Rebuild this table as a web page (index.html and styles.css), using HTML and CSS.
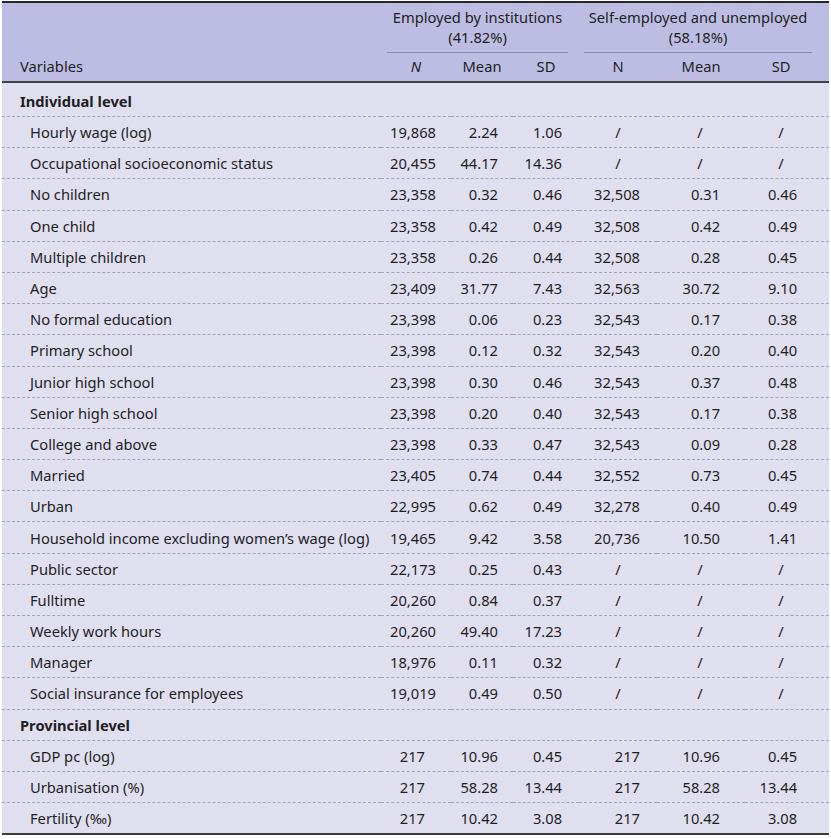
FILE: index.html
```html
<!DOCTYPE html>
<html>
<head>
<meta charset="utf-8">
<link rel="stylesheet" href="styles.css">
</head>
<body>
<table class="stats">
  <colgroup>
    <col class="c-var"><col class="c-n1"><col class="c-m1"><col class="c-s1"><col class="c-n2"><col class="c-m2"><col class="c-s2">
  </colgroup>
  <thead>
    <tr class="h1">
      <th class="var-h" rowspan="2">Variables</th>
      <th class="grp g1" colspan="3"><div class="grp-in">Employed by institutions<br>(41.82%)</div></th>
      <th class="grp g2" colspan="3"><div class="grp-in">Self-employed and unemployed<br>(58.18%)</div></th>
    </tr>
    <tr class="h2">
      <th><i>N</i></th><th>Mean</th><th>SD</th><th>N</th><th>Mean</th><th class="last">SD</th>
    </tr>
  </thead>
  <tbody>
    <tr class="sec first"><td colspan="7">Individual level</td></tr>
    <tr><td>Hourly wage (log)</td><td>19,868</td><td>2.24</td><td>1.06</td><td class="na">/</td><td class="na">/</td><td class="na">/</td></tr>
    <tr><td>Occupational socioeconomic status</td><td>20,455</td><td>44.17</td><td>14.36</td><td class="na">/</td><td class="na">/</td><td class="na">/</td></tr>
    <tr><td>No children</td><td>23,358</td><td>0.32</td><td>0.46</td><td>32,508</td><td>0.31</td><td>0.46</td></tr>
    <tr><td>One child</td><td>23,358</td><td>0.42</td><td>0.49</td><td>32,508</td><td>0.42</td><td>0.49</td></tr>
    <tr><td>Multiple children</td><td>23,358</td><td>0.26</td><td>0.44</td><td>32,508</td><td>0.28</td><td>0.45</td></tr>
    <tr><td>Age</td><td>23,409</td><td>31.77</td><td>7.43</td><td>32,563</td><td>30.72</td><td>9.10</td></tr>
    <tr><td>No formal education</td><td>23,398</td><td>0.06</td><td>0.23</td><td>32,543</td><td>0.17</td><td>0.38</td></tr>
    <tr><td>Primary school</td><td>23,398</td><td>0.12</td><td>0.32</td><td>32,543</td><td>0.20</td><td>0.40</td></tr>
    <tr><td>Junior high school</td><td>23,398</td><td>0.30</td><td>0.46</td><td>32,543</td><td>0.37</td><td>0.48</td></tr>
    <tr><td>Senior high school</td><td>23,398</td><td>0.20</td><td>0.40</td><td>32,543</td><td>0.17</td><td>0.38</td></tr>
    <tr><td>College and above</td><td>23,398</td><td>0.33</td><td>0.47</td><td>32,543</td><td>0.09</td><td>0.28</td></tr>
    <tr><td>Married</td><td>23,405</td><td>0.74</td><td>0.44</td><td>32,552</td><td>0.73</td><td>0.45</td></tr>
    <tr><td>Urban</td><td>22,995</td><td>0.62</td><td>0.49</td><td>32,278</td><td>0.40</td><td>0.49</td></tr>
    <tr><td>Household income excluding women’s wage (log)</td><td>19,465</td><td>9.42</td><td>3.58</td><td>20,736</td><td>10.50</td><td>1.41</td></tr>
    <tr><td>Public sector</td><td>22,173</td><td>0.25</td><td>0.43</td><td class="na">/</td><td class="na">/</td><td class="na">/</td></tr>
    <tr><td>Fulltime</td><td>20,260</td><td>0.84</td><td>0.37</td><td class="na">/</td><td class="na">/</td><td class="na">/</td></tr>
    <tr><td>Weekly work hours</td><td>20,260</td><td>49.40</td><td>17.23</td><td class="na">/</td><td class="na">/</td><td class="na">/</td></tr>
    <tr><td>Manager</td><td>18,976</td><td>0.11</td><td>0.32</td><td class="na">/</td><td class="na">/</td><td class="na">/</td></tr>
    <tr><td>Social insurance for employees</td><td>19,019</td><td>0.49</td><td>0.50</td><td class="na">/</td><td class="na">/</td><td class="na">/</td></tr>
    <tr class="sec"><td colspan="7">Provincial level</td></tr>
    <tr><td>GDP pc (log)</td><td class="short">217</td><td>10.96</td><td>0.45</td><td>217</td><td>10.96</td><td>0.45</td></tr>
    <tr><td>Urbanisation (%)</td><td class="short">217</td><td>58.28</td><td>13.44</td><td>217</td><td>58.28</td><td>13.44</td></tr>
    <tr class="lastrow"><td>Fertility (‰)</td><td class="short">217</td><td>10.42</td><td>3.08</td><td>217</td><td>10.42</td><td>3.08</td></tr>
  </tbody>
</table>
</body>
</html>
```

FILE: styles.css
```css
html, body {
  margin: 0;
  padding: 0;
  background: #ffffff;
}
body {
  padding: 1px 2px 0 2px;
  font-family: "Noto Sans", "Open Sans", "DejaVu Sans", sans-serif;
  font-size: 14.7px;
  color: #1e1e1e;
}
.stats {
  width: 827px;
  table-layout: fixed;
  border-collapse: collapse;
  border-top: 2px solid #262626;
  border-bottom: 2px solid #3c3c3c;
}
.c-var { width: 379px; }
.c-n1 { width: 70px; }
.c-m1 { width: 62px; }
.c-s1 { width: 66px; }
.c-n2 { width: 78px; }
.c-m2 { width: 88px; }
.c-s2 { width: 84px; }

thead th {
  background: #bdbde3;
  font-weight: normal;
  line-height: 20px;
  padding: 0;
}
thead tr.h2 th {
  border-bottom: 2px solid #404048;
  height: 26px;
  text-align: center;
  vertical-align: middle;
  padding-bottom: 2px;
}
thead tr.h2 th.last { padding-right: 12px; }
.var-h {
  text-align: left;
  vertical-align: bottom;
  padding: 0 0 5px 18px !important;
  border-bottom: 2px solid #404048;
}
.grp {
  text-align: center;
  vertical-align: top;
}
.grp-in {
  padding: 4px 0 5px 0;
  border-bottom: 1px solid #8a8aa6;
}
.g1 .grp-in { margin: 0 11px 0 6px; }
.g2 .grp-in { margin: 0 17px 0 5px; }

tbody td {
  background: #dfdff0;
  height: 30.2px;
  padding: 0;
  line-height: 20px;
  border-bottom: 1px dashed #a4a4b4;
  text-align: right;
  vertical-align: middle;
}
tbody tr.first td {
  height: 31px;
  padding-top: 2px;
}
tbody tr.lastrow td { border-bottom: none; }
tbody td:first-child {
  text-align: left;
  padding-left: 28px;
}
tbody tr.sec td {
  font-weight: bold;
  padding-left: 18px;
}
tbody td:nth-child(2) { padding-right: 15px; }
tbody td:nth-child(3) { padding-right: 15px; }
tbody td:nth-child(4) { padding-right: 17px; }
tbody td:nth-child(5) { padding-right: 17px; }
tbody td:nth-child(6) { padding-right: 25px; }
tbody td:nth-child(7) { padding-right: 32px; }
tbody td.short { padding-right: 26px; }
tbody td.na {
  text-align: center;
  padding-right: 0;
}
tbody td.na:nth-child(6) { padding-right: 2px; }
tbody td.na:nth-child(7) { padding-right: 12px; }
```
